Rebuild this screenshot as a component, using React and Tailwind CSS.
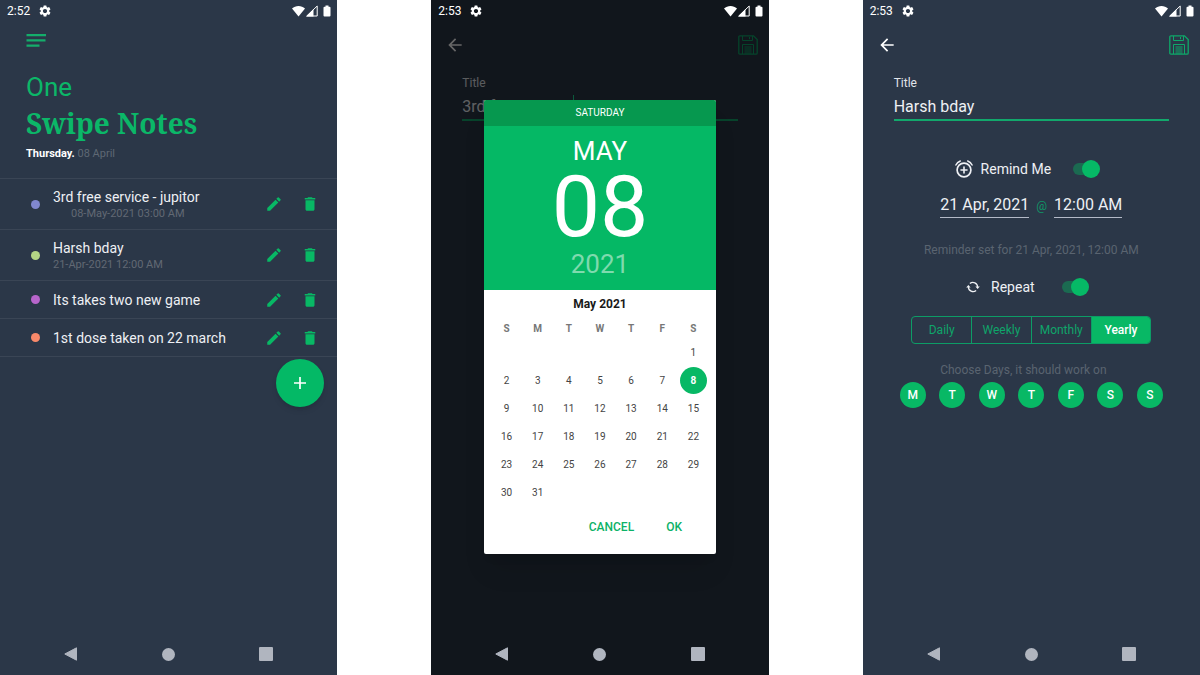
import React from "react";
import { MdSettings, MdEdit, MdDelete, MdArrowBack } from "react-icons/md";

function StatusBar({ time }) {
  return (
    <header className="relative z-10 flex h-[22px] items-center justify-between pl-[7px] pr-1.5 text-white">
      <div className="flex items-center gap-2">
        <span className="text-xs">{time}</span>
        <MdSettings className="size-3.5" />
      </div>
      <div className="flex items-center gap-px">
        <svg className="h-3 w-[13px]" viewBox="0 0 13 12" fill="currentColor" aria-hidden="true">
          <path d="M6.5 11.5 0 3.6C1.8 2 4 1 6.5 1S11.2 2 13 3.600Z" />
        </svg>
        <svg className="h-3 w-3" viewBox="0 0 12 12" fill="currentColor" aria-hidden="true">
          <path d="M0 11.5 7.500 4V11.500Z" />
          <path d="M0.800 11 11.200 1V11Z" fill="none" stroke="currentColor" strokeWidth="1" />
        </svg>
        <svg className="ml-1 h-3 w-2" viewBox="0 0 8 12" fill="currentColor" aria-hidden="true">
          <path d="M2.5 0.5h3v1.200H6.500a1 1 0 0 1 1 1V10.500a1 1 0 0 1-1 1h-5a1 1 0 0 1-1-1V2.700a1 1 0 0 1 1-1h1Z" />
        </svg>
      </div>
    </header>
  );
}

function NavBar() {
  return (
    <nav className="relative z-10 mt-auto flex h-[42px] items-center justify-between px-16 text-[#b0b5bf]" aria-label="System">
      <button type="button" aria-label="Back">
        <svg className="size-3.5" viewBox="0 0 14 14" fill="currentColor">
          <path d="M12.500 0.800V13.200L0.800 7Z" stroke="currentColor" strokeLinejoin="round" />
        </svg>
      </button>
      <button type="button" aria-label="Home" className="size-[13px] rounded-full bg-current" />
      <button type="button" aria-label="Overview" className="size-3.5 rounded-[1px] bg-current" />
    </nav>
  );
}

function Phone({ time, label, children }) {
  return (
    <section aria-label={label} className="relative flex min-h-screen flex-col bg-[#2b3748]">
      <StatusBar time={time} />
      {children}
      <NavBar />
    </section>
  );
}

const notes = [
  { title: "3rd free service - jupitor", date: "08-May-2021 03:00 AM", dot: "bg-[#8087cf]", indent: "pl-[18px]" },
  { title: "Harsh bday", date: "21-Apr-2021 12:00 AM", dot: "bg-[#b3d585]", indent: "" },
  { title: "Its takes two new game", dot: "bg-[#b765cb]" },
  { title: "1st dose taken on 22 march", dot: "bg-[#f8896a]" },
];

function NotesScreen() {
  return (
    <Phone time="2:52" label="Notes">
      <div className="px-[26px] pt-3">
        <button type="button" aria-label="Menu" className="block text-[#14ad6b]">
          <svg className="h-[13px] w-5" viewBox="0 0 20 13" fill="currentColor">
            <path d="M0.500 0h20v2.300h-20Z M0.500 5.300h19v2.300h-19Z M0.500 10.500h13v2.300h-13Z" />
          </svg>
        </button>
        <h1 className="pt-5 text-[#0bb768]">
          <span className="block text-[26px] leading-[40px]">One</span>
          <span className="block font-['Noto_Serif','DejaVu_Serif_Condensed',serif] text-[28px] leading-8 font-bold">
            Swipe Notes
          </span>
        </h1>
        <p className="pt-[7px] text-[11px] leading-4 text-[#5e6874]">
          <strong className="font-bold text-white">Thursday.</strong> 08 April
        </p>
      </div>
      <ul className="mt-4 border-t border-[#3a4555]">
        {notes.map((n) => (
          <li
            key={n.title}
            className={
              "flex items-center border-b border-[#3a4555] pr-[18px] pl-[31px] " + (n.date ? "h-[51px]" : "h-[38px]")
            }
          >
            <span className={"size-[9px] rounded-full " + n.dot} />
            <div className={"ml-[13px] flex-1 " + (n.date ? "pt-0.5" : "")}>
              <p className="text-sm leading-[18px] text-[#eef0f4]">{n.title}</p>
              {n.date && (
                <p className={"text-[11px] leading-4 text-[#626974] " + n.indent}>{n.date}</p>
              )}
            </div>
            <div className="flex gap-[18px] text-[#08b865]">
              <button type="button" aria-label={"Edit " + n.title}>
                <MdEdit className="size-[18px]" />
              </button>
              <button type="button" aria-label={"Delete " + n.title}>
                <MdDelete className="size-[18px]" />
              </button>
            </div>
          </li>
        ))}
      </ul>
      <button
        type="button"
        aria-label="Add note"
        className="mt-0.5 mr-[13px] flex size-12 items-center justify-center self-end rounded-full bg-[#04b966] text-white shadow-md"
      >
        <svg className="size-3" viewBox="0 0 12 12" stroke="currentColor" strokeWidth="1.700">
          <path d="M6 0V12M0 6H12" />
        </svg>
      </button>
    </Phone>
  );
}

function SaveIcon() {
  return (
    <svg className="size-5" viewBox="0 0 20 20" fill="none" stroke="currentColor">
      <path d="M2 0.800H15.500L19.200 4.500V18Q19.200 19.200 18 19.200H2Q0.800 19.200 0.800 18V2Q0.800 0.800 2 0.800Z" strokeWidth="1.300" />
      <path d="M4.500 1V5.500H14.500V1M11.500 2V4.200M4.500 19V9.500H15.500V19" />
      <path d="M6.500 12H13.500M6.500 14H13.500M6.500 16H13.500M6.500 18H13.500" />
    </svg>
  );
}

function EditorHeader({ id, value }) {
  return (
    <>
      <div className="flex items-center justify-between pt-[13px] pr-[11px] pl-3.5">
        <button type="button" aria-label="Back" className="text-white">
          <MdArrowBack className="size-5" />
        </button>
        <button type="button" aria-label="Save" className="text-[#0ea869]">
          <SaveIcon />
        </button>
      </div>
      <div className="px-[31px] pt-5">
        <label htmlFor={id} className="block text-xs leading-4 text-[#e2e5ea]">
          Title
        </label>
        <input
          id={id}
          defaultValue={value}
          className="mt-0.5 block h-7 w-full border-b-2 border-[#12a86c] bg-transparent text-base text-[#eef0f4] outline-none"
        />
      </div>
    </>
  );
}

const weeks = [
  ["", "", "", "", "", "", 1],
  [2, 3, 4, 5, 6, 7, 8],
  [9, 10, 11, 12, 13, 14, 15],
  [16, 17, 18, 19, 20, 21, 22],
  [23, 24, 25, 26, 27, 28, 29],
  [30, 31, "", "", "", "", ""],
];

function DatePicker() {
  return (
    <div role="dialog" aria-label="Pick a date" className="w-[232px] overflow-hidden rounded-[2px] bg-white text-center shadow-xl">
      <p className="bg-[#06984f] text-[10px] leading-[26px] text-white">SATURDAY</p>
      <div className="bg-[#05b865] pt-2 pb-2 text-white">
        <p className="text-[26px] leading-[34px]">MAY</p>
        <p className="text-[86px] leading-[78px]">08</p>
        <p className="text-[26px] leading-[36px] text-[#7fdaae]">2021</p>
      </div>
      <h2 className="pt-[5px] pb-[5px] text-xs leading-[18px] font-bold text-[#1a1a1a]">May 2021</h2>
      <table className="mx-auto w-[218px] table-fixed text-[10px] text-[#444]">
        <thead>
          <tr className="h-5 text-[#777]">
            {["S", "M", "T", "W", "T", "F", "S"].map((d, i) => (
              <th key={i} scope="col" className="p-0 font-bold">
                {d}
              </th>
            ))}
          </tr>
        </thead>
        <tbody>
          {weeks.map((w, r) => (
            <tr key={r} className="h-7">
              {w.map((d, i) => (
                <td key={i} className="p-0">
                  {d === 8 ? (
                    <button
                      type="button"
                      aria-pressed="true"
                      className="mx-auto block size-[27px] rounded-full bg-[#08b865] font-bold text-white"
                    >
                      8
                    </button>
                  ) : (
                    d && (
                      <button type="button" className="block w-full">
                        {d}
                      </button>
                    )
                  )}
                </td>
              ))}
            </tr>
          ))}
        </tbody>
      </table>
      <div className="flex justify-end gap-8 pt-3 pr-[34px] pb-[18px] text-xs leading-[18px] font-medium text-[#0cb267]">
        <button type="button">CANCEL</button>
        <button type="button">OK</button>
      </div>
    </div>
  );
}

function PickerScreen() {
  return (
    <Phone time="2:53" label="Date picker">
      <EditorHeader id="title-service" value="3rd free service - jupitor" />
      <div className="absolute inset-0 flex flex-col items-center bg-black/60 pt-[95px]">
        <span className="mr-[52px] h-[5px] w-px bg-[#0b5a3c]" />
        <DatePicker />
      </div>
    </Phone>
  );
}

function Toggle({ id }) {
  return (
    <input
      id={id}
      type="checkbox"
      role="switch"
      defaultChecked
      className="relative h-[18px] w-[27px] appearance-none before:absolute before:top-[3px] before:left-0 before:h-3 before:w-6 before:rounded-full before:bg-[#1b6a51] after:absolute after:top-0 after:left-0 after:size-[18px] after:rounded-full after:bg-[#94a3b8] checked:after:left-[9px] checked:after:bg-[#06b966]"
    />
  );
}

function AlarmAddIcon() {
  return (
    <svg className="size-[18px]" viewBox="0 0 18 18" fill="none" stroke="currentColor" strokeLinecap="round" aria-hidden="true">
      <circle cx="9" cy="10" r="6.900" strokeWidth="1.700" />
      <path d="M9 7V13M6 10H12" strokeWidth="1.600" />
      <path d="M0.900 5Q2.200 2.200 5.300 1M17.100 5Q15.800 2.200 12.700 1" strokeWidth="1.500" />
    </svg>
  );
}

function RepeatIcon() {
  return (
    <svg className="h-3 w-3.5" viewBox="0 0 14 12" fill="none" stroke="currentColor" strokeWidth="1.300" aria-hidden="true">
      <path d="M3.900 2.600A4.600 4.600 0 0 1 11.600 6M10.100 9.400A4.600 4.600 0 0 1 2.400 6" />
      <path d="M9.400 5.500H13.800L11.600 8Z M0.200 6.500H4.600L2.400 4Z" fill="currentColor" stroke="none" />
    </svg>
  );
}

const periods = ["Daily", "Weekly", "Monthly", "Yearly"];
const days = ["Monday", "Tuesday", "Wednesday", "Thursday", "Friday", "Saturday", "Sunday"];

function ReminderScreen() {
  return (
    <Phone time="2:53" label="Reminder">
      <EditorHeader id="title-bday" value="Harsh bday" />
      <div className="flex flex-col items-center px-[37px] pt-[38px]">
        <div className="flex h-5 items-center pr-2 text-[#eef0f4]">
          <AlarmAddIcon />
          <label htmlFor="remind" className="mr-[22px] ml-2 text-sm">
            Remind Me
          </label>
          <Toggle id="remind" />
        </div>
        <div className="mt-3.5 flex items-center gap-[7px] text-base leading-6 text-[#eef0f4]">
          <button type="button" className="border-b border-[#b4bac8]">21 Apr, 2021</button>
          <span className="text-xs text-[#109567]">@</span>
          <button type="button" className="border-b border-[#b4bac8]">12:00 AM</button>
        </div>
        <p className="mt-[23px] text-xs leading-[18px] text-[#5a6470]">Reminder set for 21 Apr, 2021, 12:00 AM</p>
        <div className="mt-[18px] flex h-5 items-center pr-2 text-[#eef0f4]">
          <RepeatIcon />
          <label htmlFor="repeat" className="mr-[27px] ml-[11px] text-sm">
            Repeat
          </label>
          <Toggle id="repeat" />
        </div>
        <div className="mt-[19px] flex h-7 w-[240px] divide-x divide-[#0d9c66] overflow-hidden rounded border border-[#0d9c66]">
          {periods.map((p) => (
            <button
              key={p}
              type="button"
              aria-pressed={p === "Yearly"}
              className={
                p === "Yearly"
                  ? "flex-1 bg-[#08b865] text-xs font-medium text-white"
                  : "flex-1 text-xs text-[#0fa56a]"
              }
            >
              {p}
            </button>
          ))}
        </div>
        <p className="mt-[18px] pr-4 text-xs leading-4 text-[#5a6470]">Choose Days, it should work on</p>
        <div className="mt-1 flex w-full justify-between">
          {days.map((d) => (
            <button
              key={d}
              type="button"
              aria-label={d}
              aria-pressed="true"
              className="size-[26px] rounded-full bg-[#08b865] text-xs font-medium text-white"
            >
              {d[0]}
            </button>
          ))}
        </div>
      </div>
    </Phone>
  );
}

export default function App() {
  return (
    <main className="grid min-h-screen grid-cols-3 gap-[94px] bg-white font-['Roboto',sans-serif]">
      <NotesScreen />
      <PickerScreen />
      <ReminderScreen />
    </main>
  );
}
